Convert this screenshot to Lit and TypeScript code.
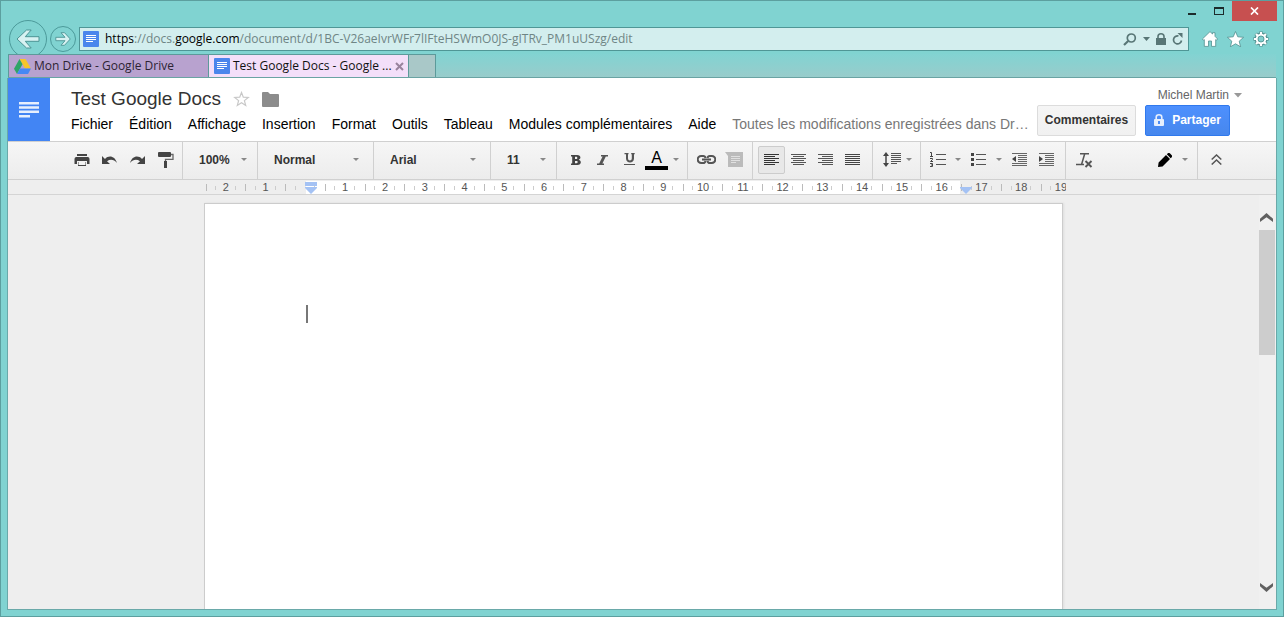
import { LitElement, html, css, svg, nothing } from "lit";
import type { SVGTemplateResult } from "lit";
import { customElement, property } from "lit/decorators.js";
import { classMap } from "lit/directives/class-map.js";

type Glyph = { w: number; h: number; body: SVGTemplateResult };

const lines = (rows: Array<[number, number, number]>) =>
  rows.map(([x, y, w]) => svg`<rect x=${x} y=${y} width=${w} height="1"/>`);

const alignRows = (kind: "left" | "center" | "right" | "full") =>
  [15, 11, 15, 11, 15, 11].map((w, i): [number, number, number] => {
    const width = kind === "full" ? 15 : w;
    const x = kind === "center" ? (15 - width) / 2 : kind === "right" ? 15 - width : 0;
    return [x, i * 2 + 1, width];
  });

const GLYPHS: Record<string, Glyph> = {
  back: {
    w: 24, h: 20,
    body: svg`<path d="M10.500 1h4.700L9.300 7.700h13.700v4.600H9.300L15.200 19h-4.700L1 10z" fill="#d8f2f2" stroke="#4c9494" stroke-width="1"/>`,
  },
  forward: {
    w: 16, h: 14,
    body: svg`<path d="M9.500 .7H6l4 4.600H.8v3.400H10L6 13.300h3.500L15.300 7z" fill="#d8f2f2" stroke="#4c9494" stroke-width=".9"/>`,
  },
  doc: {
    w: 16, h: 16,
    body: svg`<rect width="16" height="16" rx="1" fill="#4a86ec"/><path d="M3 4.500h10M3 6.500h10M3 8.500h10M3 10.500h7" stroke="#fff"/>`,
  },
  drive: {
    w: 17, h: 15,
    body: svg`<path d="M5.500 0h6L17 9.500h-6z" fill="#f6c52c"/><path d="M5.500 0l3 5.200L3 15 0 9.800z" fill="#2ea567"/><path d="M6 9.600h11L14 15H3z" fill="#4688f4"/>`,
  },
  closeTab: { w: 9, h: 9, body: svg`<path d="M1 1l7 7M8 1L1 8" stroke="#98839d" stroke-width="2"/>` },
  search: {
    w: 14, h: 13,
    body: svg`<circle cx="8.300" cy="5" r="4" fill="none" stroke="#587676" stroke-width="1.700"/><path d="M5.200 8L1 12" stroke="#587676" stroke-width="2.200"/>`,
  },
  caret: { w: 7, h: 4, body: svg`<path d="M0 0h7L3.500 4z" fill="#587676"/>` },
  lock: {
    w: 10, h: 12,
    body: svg`<rect y="5" width="10" height="7" fill="#587676"/><path d="M2 5.500V3.500a3 2.700 0 0 1 6 0v2" fill="none" stroke="#587676" stroke-width="1.600"/>`,
  },
  reload: {
    w: 11, h: 12,
    body: svg`<path d="M9.500 7.500A4 4 0 1 1 6.500 3" fill="none" stroke="#587676" stroke-width="1.700"/><path d="M5.500 0h5v5z" fill="#587676"/>`,
  },
  home: {
    w: 16, h: 16,
    body: svg`<path d="M8 .6l2.500 2.400V1.700h2.500v3.600L15.600 8l-1.100 1.200-.8-.6V15.400H9.500V10h-3v5.400H2.300V8.600l-.8.6L.4 8z" fill="#fff" stroke="#528f8f" stroke-width=".8"/>`,
  },
  star: {
    w: 17, h: 16,
    body: svg`<path d="M8.500.5l2.300 5.300 5.800.5-4.400 3.900 1.400 5.600-5.100-3-5.100 3 1.400-5.600L.4 6.300l5.800-.5z" fill="#fff" stroke="#528f8f" stroke-width=".8"/>`,
  },
  gear: {
    w: 16, h: 16,
    body: svg`<g fill="none"><path d="M8 .5v15M.5 8h15M2.700 2.700l10.600 10.600M13.300 2.700L2.700 13.300" stroke="#528f8f" stroke-width="3.600"/><circle cx="8" cy="8" r="4.700" stroke="#528f8f" stroke-width="3.400"/><path d="M8 1v14M1 8h14M3 3l10 10M13 3L3 13" stroke="#fff" stroke-width="2.200"/></g><circle cx="8" cy="8" r="3.500" fill="#82cfcd"/><circle cx="8" cy="8" r="4.300" fill="none" stroke="#fff" stroke-width="2"/><circle cx="8" cy="8" r="3" fill="#82cfcd" stroke="#528f8f" stroke-width=".8"/>`,
  },
  minimize: { w: 8, h: 10, body: svg`<rect y="7" width="8" height="2" fill="#1c2b2b"/>` },
  maximize: { w: 10, h: 10, body: svg`<path d="M0 1h10v8H0zM1 3v5h8V3z" fill="#1c2b2b" fill-rule="evenodd"/>` },
  closeWindow: { w: 9, h: 8, body: svg`<path d="M1 .5l7 7M8 .5l-7 7" stroke="#fff" stroke-width="1.700"/>` },
  appLogo: {
    w: 20, h: 16,
    body: svg`<path d="M0 1.200h20M0 5.500h20M0 9.800h20M0 14.200h11" stroke="#e6effd" stroke-width="2.400"/>`,
  },
  favorite: {
    w: 17, h: 16,
    body: svg`<path d="M8.500 1.500l1.800 4.600 5 .3-3.900 3.200 1.300 4.800-4.200-2.700-4.200 2.700 1.300-4.800L1.700 6.400l5-.3z" fill="#fff" stroke="#c8c8c8" stroke-width="1.200"/>`,
  },
  folder: { w: 17, h: 15, body: svg`<path d="M0 1a1 1 0 0 1 1-1h5l2 2h8a1 1 0 0 1 1 1v11a1 1 0 0 1-1 1H1a1 1 0 0 1-1-1z" fill="#8c8c8c"/>` },
  shareLock: {
    w: 10, h: 12,
    body: svg`<rect y="5" width="10" height="7" rx="1" fill="#e6effd"/><path d="M2.200 5.500V3.300a2.800 2.500 0 0 1 5.600 0v2.200" fill="none" stroke="#e6effd" stroke-width="1.600"/><rect x="4" y="7" width="2" height="3" fill="#4b8bf5"/>`,
  },
  userCaret: { w: 8, h: 5, body: svg`<path d="M0 0h8L4 4.500z" fill="#999"/>` },
  drop: { w: 6, h: 3, body: svg`<path d="M0 0h6L3 3z" fill="#888"/>` },
  print: {
    w: 16, h: 14,
    body: svg`<path d="M3 1h10v2H3zM2 4h12a2 2 0 0 1 1.500 2v5H13V8H3v3H.500V6A2 2 0 0 1 2 4zM4 9h8v4H4z" fill="#444"/><path d="M4.500 8.500h7v3.500h-7z" fill="#f5f5f5"/>`,
  },
  undo: { w: 17, h: 10, body: svg`<path d="M1 1v8h8L6 6.200C9.500 3.800 13 4.500 16 8 14 1.200 8-.3 4 4z" fill="#444"/>` },
  redo: { w: 17, h: 10, body: svg`<path d="M16 1v8H8l3-2.800C7.500 3.800 4 4.500 1 8 3 1.200 9-.3 13 4z" fill="#444"/>` },
  paint: {
    w: 16, h: 18,
    body: svg`<rect y="1" width="13" height="5" rx="1" fill="#444"/><path d="M13 3.500h2v4.800H7.500V11" fill="none" stroke="#666" stroke-width="1.300"/><rect x="6" y="10" width="3" height="7" fill="#444"/>`,
  },
  bold: { w: 10, h: 10, body: svg`<path d="M0 0h6c4.200 0 4.200 4 1.700 4.700C11 5.500 10.400 10 6.300 10H0V8.400h1.200V1.600H0zM4 1.800v2.300h1.200c1.500 0 1.500-2.300 0-2.300zM4 5.900v2.300h1.500c1.600 0 1.600-2.300 0-2.300z" fill="#444" fill-rule="evenodd"/>` },
  italic: { w: 11, h: 10, body: svg`<path d="M4 0h7v1.500H8.800L5.400 8.500H7V10H0V8.500h2.200l3.400-7H4z" fill="#555"/>` },
  underline: { w: 11, h: 13, body: svg`<path d="M.5 0h4v1.300H4v4c0 3 3.800 3 3.800 0v-4h-.6V0h3.500v1.300H10v4.200c0 5.200-8 5.200-8 0V1.300H.5z" fill="#555"/><rect y="11" width="11" height="1" fill="#555"/>` },
  link: {
    w: 19, h: 9,
    body: svg`<g fill="none" stroke="#555" stroke-width="2"><path d="M8.500 3C8.200 1.500 7.500 1 6.300 1H4.200a3.300 3.300 0 0 0 0 7h2.100C7.500 8 8.200 7.500 8.500 6M10.500 3C10.800 1.500 11.500 1 12.700 1h2.100a3.300 3.300 0 0 1 0 7h-2.100C11.500 8 10.800 7.500 10.500 6M5 4.500h9"/></g>`,
  },
  comment: {
    w: 18, h: 15,
    body: svg`<path d="M0 0h18v15H3V4z" fill="#bbb"/><path d="M6 4.500h9M6 6.500h9M6 8.500h9" stroke="#e0e0e0"/><path d="M6 10.500h5" stroke="#e0e0e0"/>`,
  },
  alignLeft: { w: 15, h: 13, body: svg`<g fill="#333">${lines(alignRows("left"))}</g>` },
  alignCenter: { w: 15, h: 13, body: svg`<g fill="#555">${lines(alignRows("center"))}</g>` },
  alignRight: { w: 15, h: 13, body: svg`<g fill="#555">${lines(alignRows("right"))}</g>` },
  alignFull: { w: 15, h: 13, body: svg`<g fill="#444">${lines(alignRows("full"))}</g>` },
  spacing: {
    w: 18, h: 15,
    body: svg`<path d="M3 3v9" stroke="#444" stroke-width="1.500"/><path d="M0 4l3-4 3 4zM0 11l3 4 3-4z" fill="#444"/><g fill="#555">${lines([[8, 1, 10], [8, 3, 10], [8, 5, 10], [8, 7, 10], [8, 9, 10], [8, 11, 6]])}</g>`,
  },
  numbered: {
    w: 16, h: 15,
    body: svg`<g fill="none" stroke="#444"><path d="M0 .5h1.500V4M0 4.500h3M0 6.500h2.500v1L.500 9.500H3M0 11.500h2.500v3H0M1 13h1.500"/></g><g fill="#555">${lines([[6, 2, 10], [6, 7, 10], [6, 12, 10]])}</g>`,
  },
  bullets: {
    w: 15, h: 14,
    body: svg`<path d="M0 0h3v3H0zM0 5h3v3H0zM0 10h3v3H0z" fill="#444"/><g fill="#555">${lines([[5, 1, 10], [5, 6, 10], [5, 11, 10]])}</g>`,
  },
  outdent: {
    w: 15, h: 13,
    body: svg`<g fill="#666">${lines([[0, 0, 15], [6, 2, 9], [6, 4, 9], [6, 6, 9], [6, 8, 9], [0, 10, 15], [0, 12, 15]])}</g><path d="M4 3v6L0 6z" fill="#444"/>`,
  },
  indent: {
    w: 15, h: 13,
    body: svg`<g fill="#666">${lines([[0, 0, 15], [6, 2, 9], [6, 4, 9], [6, 6, 9], [6, 8, 9], [0, 10, 15], [0, 12, 15]])}</g><path d="M0 3v6l4-3z" fill="#444"/>`,
  },
  clear: {
    w: 17, h: 16,
    body: svg`<path d="M4 1.700h9M8.800 1.500L5.700 12M0 12.500h8" stroke="#555" stroke-width="1.500" fill="none"/><path d="M9.500 9l6 6M15.500 9l-6 6" stroke="#555" stroke-width="1.900"/>`,
  },
  pencil: { w: 14, h: 14, body: svg`<path d="M0 14l.6-4.500L8 2l4 4L4.500 13.400zM8.800 1.300l.8-.8a1.800 1.800 0 0 1 2.500 0l1.400 1.400a1.800 1.800 0 0 1 0 2.500l-.8.8z" fill="#000"/>` },
  collapse: { w: 11, h: 11, body: svg`<path d="M.7 5.500L5.500 1l4.800 4.500M.7 10.500L5.500 6l4.800 4.500" fill="none" stroke="#555" stroke-width="1.500"/>` },
  scrollUp: { w: 13, h: 9, body: svg`<path d="M0 9V5.800L6.500 0 13 5.800V9L6.500 4.300z" fill="#606060"/>` },
  scrollDown: { w: 13, h: 9, body: svg`<path d="M0 0v3.200L6.500 9 13 3.200V0L6.500 4.700z" fill="#606060"/>` },
  firstIndent: { w: 12, h: 12, body: svg`<path d="M0 0h12v4H0zM0 5h12v1L6 12 0 6z" fill="#a4c2f4"/>` },
  rightIndent: { w: 12, h: 7, body: svg`<path d="M0 0h12v1L6 7 0 1z" fill="#a4c2f4"/>` },
};

@customElement("ui-glyph")
class UiGlyph extends LitElement {
  static styles = css`
    :host { display: block; flex: none; }
    .glyph { display: block; }
  `;
  @property() name = "";
  render() {
    const g = GLYPHS[this.name];
    return g
      ? html`<svg class="glyph" width=${g.w} height=${g.h} viewBox="0 0 ${g.w} ${g.h}" aria-hidden="true">${g.body}</svg>`
      : nothing;
  }
}

@customElement("browser-chrome")
class BrowserChrome extends LitElement {
  static styles = css`
    :host { display: block; font: 12px/16px "Open Sans", "Noto Sans", sans-serif; color: #111; }
    button { border: 0; padding: 0; margin: 0; background: none; font: inherit; color: inherit; display: flex; align-items: center; justify-content: center; flex: none; }
    .caption { display: flex; justify-content: flex-end; height: 20px; margin-right: -1px; }
    .control { width: 27px; }
    .close { width: 45px; background: #c75050; }
    .nav { display: flex; align-items: center; height: 30px; padding-top: 3px; }
    .round { border: 1px solid #4c9a9a; border-radius: 50%; box-sizing: border-box; }
    .prev { width: 38px; height: 38px; margin-left: 1px; }
    .next { width: 26px; height: 26px; margin: 0 3px; }
    .address { flex: 1; min-width: 0; display: flex; align-items: center; height: 24px; box-sizing: border-box; border: 1px solid #4f9696; background: #d3eeee; padding: 0 5px 0 3px; gap: 6px; }
    .url { flex: 1; min-width: 0; white-space: nowrap; overflow: hidden; color: #6f8585; text-decoration: none; }
    .strong { color: #000; }
    .tools { display: flex; gap: 9px; padding: 0 7px 0 13px; }
    .tabs { position: relative; display: flex; height: 24px; box-sizing: border-box; border-bottom: 1px solid #6aa3a3; background: linear-gradient(#82d3d2, #98cccb); }
    .tab { display: flex; align-items: center; width: 200px; box-sizing: border-box; gap: 3px; padding: 0 4px 0 5px; border: solid #5c9a9a; border-width: 1px 1px 0 0; background: #b8a2cf; color: #2d2433; }
    .tab:first-child { width: 201px; border-left-width: 1px; }
    .current { background: #f3dff9; color: #111; }
    .label { flex: 1; min-width: 0; white-space: nowrap; justify-content: flex-start; }
    .new { width: 27px; border: solid #5c9a9a; border-width: 1px 1px 0 0; background: #a9c8c8; }
  `;
  render() {
    return html`
      <div class="caption">
        <button class="control" aria-label="Réduire"><ui-glyph name="minimize"></ui-glyph></button>
        <button class="control" aria-label="Agrandir"><ui-glyph name="maximize"></ui-glyph></button>
        <button class="close" aria-label="Fermer"><ui-glyph name="closeWindow"></ui-glyph></button>
      </div>
      <div class="nav">
        <button class="round prev" aria-label="Précédent"><ui-glyph name="back"></ui-glyph></button>
        <button class="round next" aria-label="Suivant"><ui-glyph name="forward"></ui-glyph></button>
        <div class="address">
          <ui-glyph name="doc"></ui-glyph>
          <a class="url" href="#"><span class="strong">https</span>://docs.<span class="strong">google.com</span>/document/d/1BC-V26aeIvrWFr7lIFteHSWmO0JS-gITRv_PM1uUSzg/edit</a>
          <button aria-label="Rechercher"><ui-glyph name="search"></ui-glyph></button>
          <button aria-label="Historique"><ui-glyph name="caret"></ui-glyph></button>
          <ui-glyph name="lock"></ui-glyph>
          <button aria-label="Actualiser"><ui-glyph name="reload"></ui-glyph></button>
        </div>
        <div class="tools">
          <button aria-label="Accueil"><ui-glyph name="home"></ui-glyph></button>
          <button aria-label="Favoris"><ui-glyph name="star"></ui-glyph></button>
          <button aria-label="Outils"><ui-glyph name="gear"></ui-glyph></button>
        </div>
      </div>
      <div class="tabs">
        <div class="tab"><ui-glyph name="drive"></ui-glyph><button class="label">Mon Drive - Google Drive</button></div>
        <div class="tab current">
          <ui-glyph name="doc"></ui-glyph><button class="label">Test Google Docs - Google ...</button>
          <button aria-label="Fermer l'onglet"><ui-glyph name="closeTab"></ui-glyph></button>
        </div>
        <button class="new" aria-label="Nouvel onglet"></button>
      </div>
    `;
  }
}

const MENUS = ["Fichier", "Édition", "Affichage", "Insertion", "Format", "Outils", "Tableau", "Modules complémentaires", "Aide"];

@customElement("doc-header")
class DocHeader extends LitElement {
  static styles = css`
    :host { display: flex; height: 63px; background: #fff; font-family: "Liberation Sans", Arial, sans-serif; }
    button { border: 0; padding: 0; margin: 0; background: none; font: inherit; color: inherit; display: flex; align-items: center; flex: none; }
    .logo { width: 42px; flex: none; background: #4285f4; display: flex; align-items: center; justify-content: center; }
    .main { flex: 1; min-width: 0; padding: 9px 0 0 21px; }
    .heading { display: flex; align-items: center; gap: 12px; height: 24px; }
    .title { margin: 0; font-size: 19px; line-height: 24px; font-weight: 400; color: #333; }
    .menus { display: flex; align-items: center; gap: 16px; margin-top: 4px; font-size: 14px; line-height: 18px; color: #000; white-space: nowrap; }
    .status { color: #777; }
    .side { display: flex; flex-direction: column; align-items: flex-end; padding: 9px 34px 0 0; font-size: 12px; line-height: 16px; }
    .user { gap: 5px; color: #666; height: 16px; }
    .actions { display: flex; gap: 9px; margin: 2px 12px 0 0; }
    .action { height: 31px; box-sizing: border-box; justify-content: center; border: 1px solid #dcdcdc; border-radius: 2px; font-weight: 700; padding-bottom: 2px; }
    .comments { width: 99px; background: linear-gradient(#f5f5f5, #f1f1f1); color: #333; }
    .share { width: 85px; gap: 8px; color: #fff; border-color: #3079ed; background: linear-gradient(#4d90fe, #4787ed); }
  `;
  render() {
    return html`
      <a class="logo" href="#" aria-label="Accueil Docs"><ui-glyph name="appLogo"></ui-glyph></a>
      <div class="main">
        <div class="heading">
          <h1 class="title">Test Google Docs</h1>
          <button aria-label="Suivre"><ui-glyph name="favorite"></ui-glyph></button>
          <button aria-label="Déplacer"><ui-glyph name="folder"></ui-glyph></button>
        </div>
        <div class="menus">
          ${MENUS.map((m) => html`<button>${m}</button>`)}
          <span class="status">Toutes les modifications enregistrées dans Dr…</span>
        </div>
      </div>
      <div class="side">
        <button class="user">Michel Martin<ui-glyph name="userCaret"></ui-glyph></button>
        <div class="actions">
          <button class="action comments">Commentaires</button>
          <button class="action share"><ui-glyph name="shareLock"></ui-glyph>Partager</button>
        </div>
      </div>
    `;
  }
}

@customElement("doc-toolbar")
class DocToolbar extends LitElement {
  static styles = css`
    :host { display: flex; height: 39px; box-sizing: border-box; border: solid #d0d0d0; border-width: 1px 0; background: linear-gradient(#f6f6f6, #ececec); font: 700 12px/16px "Liberation Sans", Arial, sans-serif; color: #333; }
    button { border: 1px solid transparent; padding: 0; margin: 0; background: none; font: inherit; color: inherit; display: flex; align-items: center; justify-content: center; flex: none; width: 27px; height: 28px; box-sizing: border-box; border-radius: 2px; }
    .group { display: flex; align-items: center; box-sizing: border-box; border-right: 1px solid #d0d0d0; flex: none; padding: 0 0 2px 5px; }
    .files { width: 175px; padding-left: 60px; gap: 1px; }
    .zoom { width: 75px; }
    .style { width: 116px; }
    .font { width: 117px; }
    .size { width: 66px; }
    .text { width: 131px; }
    .text .narrow { width: 12px; }
    .insert { width: 65px; }
    .align { width: 120px; }
    .space { width: 48px; }
    .space .narrow { width: 8px; }
    .lists { width: 145px; padding-left: 3px; }
    .format { flex: 1; padding-right: 5px; }
    .mode { margin-left: auto; }
    .more { width: 78px; border-right: 0; }
    .pick { padding-left: 16px; padding-right: 10px; }
    .style, .font { padding-right: 14px; }
    .pick ui-glyph { pointer-events: none; }
    .select { flex: 1; min-width: 0; appearance: none; border: 0; padding: 0; margin: 0; background: none; font: inherit; color: inherit; }
    .narrow { width: 14px; }
    .pressed { border-color: #ccc; background: #e8e8e8; }
    .color { flex-direction: column; font-size: 16px; line-height: 17px; font-weight: 400; color: #000; }
    .swatch { width: 23px; height: 4px; background: #000; }
  `;

  private pick(cls: string, label: string, value: string) {
    return html`<div class="group pick ${cls}">
      <select class="select" aria-label=${label}><option>${value}</option></select>
      <ui-glyph name="drop"></ui-glyph>
    </div>`;
  }

  private tool(name: string, label: string, extra: Record<string, boolean> = {}) {
    return html`<button class=${classMap(extra)} aria-label=${label}><ui-glyph name=${name}></ui-glyph></button>`;
  }

  render() {
    const narrow = { narrow: true };
    return html`
      <div class="group files">
        ${this.tool("print", "Imprimer")}${this.tool("undo", "Annuler")}${this.tool("redo", "Rétablir")}${this.tool("paint", "Reproduire la mise en forme")}
      </div>
      ${this.pick("zoom", "Zoom", "100%")}
      ${this.pick("style", "Styles", "Normal")}
      ${this.pick("font", "Police", "Arial")}
      ${this.pick("size", "Taille", "11")}
      <div class="group text">
        ${this.tool("bold", "Gras")}${this.tool("italic", "Italique")}${this.tool("underline", "Souligné")}
        <button class="color" aria-label="Couleur du texte"><span>A</span><span class="swatch"></span></button>
        ${this.tool("drop", "Choisir une couleur", narrow)}
      </div>
      <div class="group insert">${this.tool("link", "Insérer un lien")}${this.tool("comment", "Commenter")}</div>
      <div class="group align">
        ${this.tool("alignLeft", "Aligner à gauche", { pressed: true })}${this.tool("alignCenter", "Centrer")}${this.tool("alignRight", "Aligner à droite")}${this.tool("alignFull", "Justifier")}
      </div>
      <div class="group space">${this.tool("spacing", "Interligne")}${this.tool("drop", "Options d'interligne", narrow)}</div>
      <div class="group lists">
        ${this.tool("numbered", "Liste numérotée")}${this.tool("drop", "Options de numérotation", narrow)}${this.tool("bullets", "Liste à puces")}${this.tool("drop", "Options de puces", narrow)}${this.tool("outdent", "Diminuer le retrait")}${this.tool("indent", "Augmenter le retrait")}
      </div>
      <div class="group format">
        ${this.tool("clear", "Supprimer la mise en forme")}
        ${this.tool("pencil", "Mode", { mode: true })}${this.tool("drop", "Options du mode", narrow)}
      </div>
      <div class="group more">${this.tool("collapse", "Masquer les menus")}</div>
    `;
  }
}

const RULER_MARKS = [2, 1, 0, ...Array.from({ length: 19 }, (_, i) => i + 1)];

@customElement("doc-canvas")
class DocCanvas extends LitElement {
  static styles = css`
    :host { display: flex; flex-direction: column; flex: 1; min-height: 0; background: #eee; font: 11px/13px "Liberation Sans", Arial, sans-serif; color: #555; }
    .ruler { display: flex; justify-content: center; height: 15px; box-sizing: border-box; border-bottom: 1px solid #d4d4d4; padding: 1px 13px 0 0; }
    .strip { position: relative; width: 860px; height: 13px; overflow: hidden; background: linear-gradient(#fff, #fff) 100px 0 / 654px 13px no-repeat; }
    .marks { display: flex; width: 875px; }
    .mark { flex: 1; text-align: center; height: 13px; padding-left: 1px; background:
      linear-gradient(#bbb, #bbb) 0 3px / 1px 7px no-repeat,
      linear-gradient(#ccc, #ccc) 25% 5px / 1px 4px no-repeat,
      linear-gradient(#ccc, #ccc) 76% 5px / 1px 4px no-repeat; }
    .first { position: absolute; left: 99px; top: 1px; }
    .last { position: absolute; left: 754px; top: 6px; }
    .body { display: flex; flex: 1; min-height: 0; }
    .desk { flex: 1; display: flex; justify-content: center; padding-top: 8px; overflow: hidden; }
    .sheet { width: 859px; box-sizing: border-box; border: 1px solid #ccc; border-bottom: 0; box-shadow: 1px 0 2px #ddd; background: #fff; padding: 101px 101px 0; }
    .caret { display: block; width: 2px; height: 18px; background: #777; }
    .scroll { width: 17px; display: flex; flex-direction: column; align-items: flex-start; background: #f0f0f0; padding-top: 10px; }
    .arrow { border: 0; padding: 0 1px; background: none; height: 25px; display: flex; align-items: center; }
    .thumb { width: 16px; height: 125px; background: #cdcdcd; margin-bottom: auto; }
    .down { height: 44px; }
  `;
  render() {
    return html`
      <div class="ruler">
        <div class="strip">
          <div class="marks">${RULER_MARKS.map((n) => html`<div class="mark">${n || nothing}</div>`)}</div>
          <ui-glyph class="first" name="firstIndent"></ui-glyph>
          <ui-glyph class="last" name="rightIndent"></ui-glyph>
        </div>
      </div>
      <div class="body">
        <div class="desk">
          <div class="sheet" role="textbox" aria-label="Document"><span class="caret"></span></div>
        </div>
        <div class="scroll">
          <button class="arrow" aria-label="Défiler vers le haut"><ui-glyph name="scrollUp"></ui-glyph></button>
          <div class="thumb"></div>
          <button class="arrow down" aria-label="Défiler vers le bas"><ui-glyph name="scrollDown"></ui-glyph></button>
        </div>
      </div>
    `;
  }
}

@customElement("app-root")
class AppRoot extends LitElement {
  static styles = css`
    :host { display: flex; flex-direction: column; height: 100vh; box-sizing: border-box; border: 1px solid #5c9f9f; padding: 0 7px 6px; background: #80d3d1; }
    .page { display: flex; flex-direction: column; flex: 1; min-height: 0; border: solid #6aa9a9; border-width: 0 1px 1px; margin: 0 -1px; }
  `;
  render() {
    return html`
      <browser-chrome></browser-chrome>
      <main class="page">
        <doc-header></doc-header>
        <doc-toolbar></doc-toolbar>
        <doc-canvas></doc-canvas>
      </main>
    `;
  }
}
